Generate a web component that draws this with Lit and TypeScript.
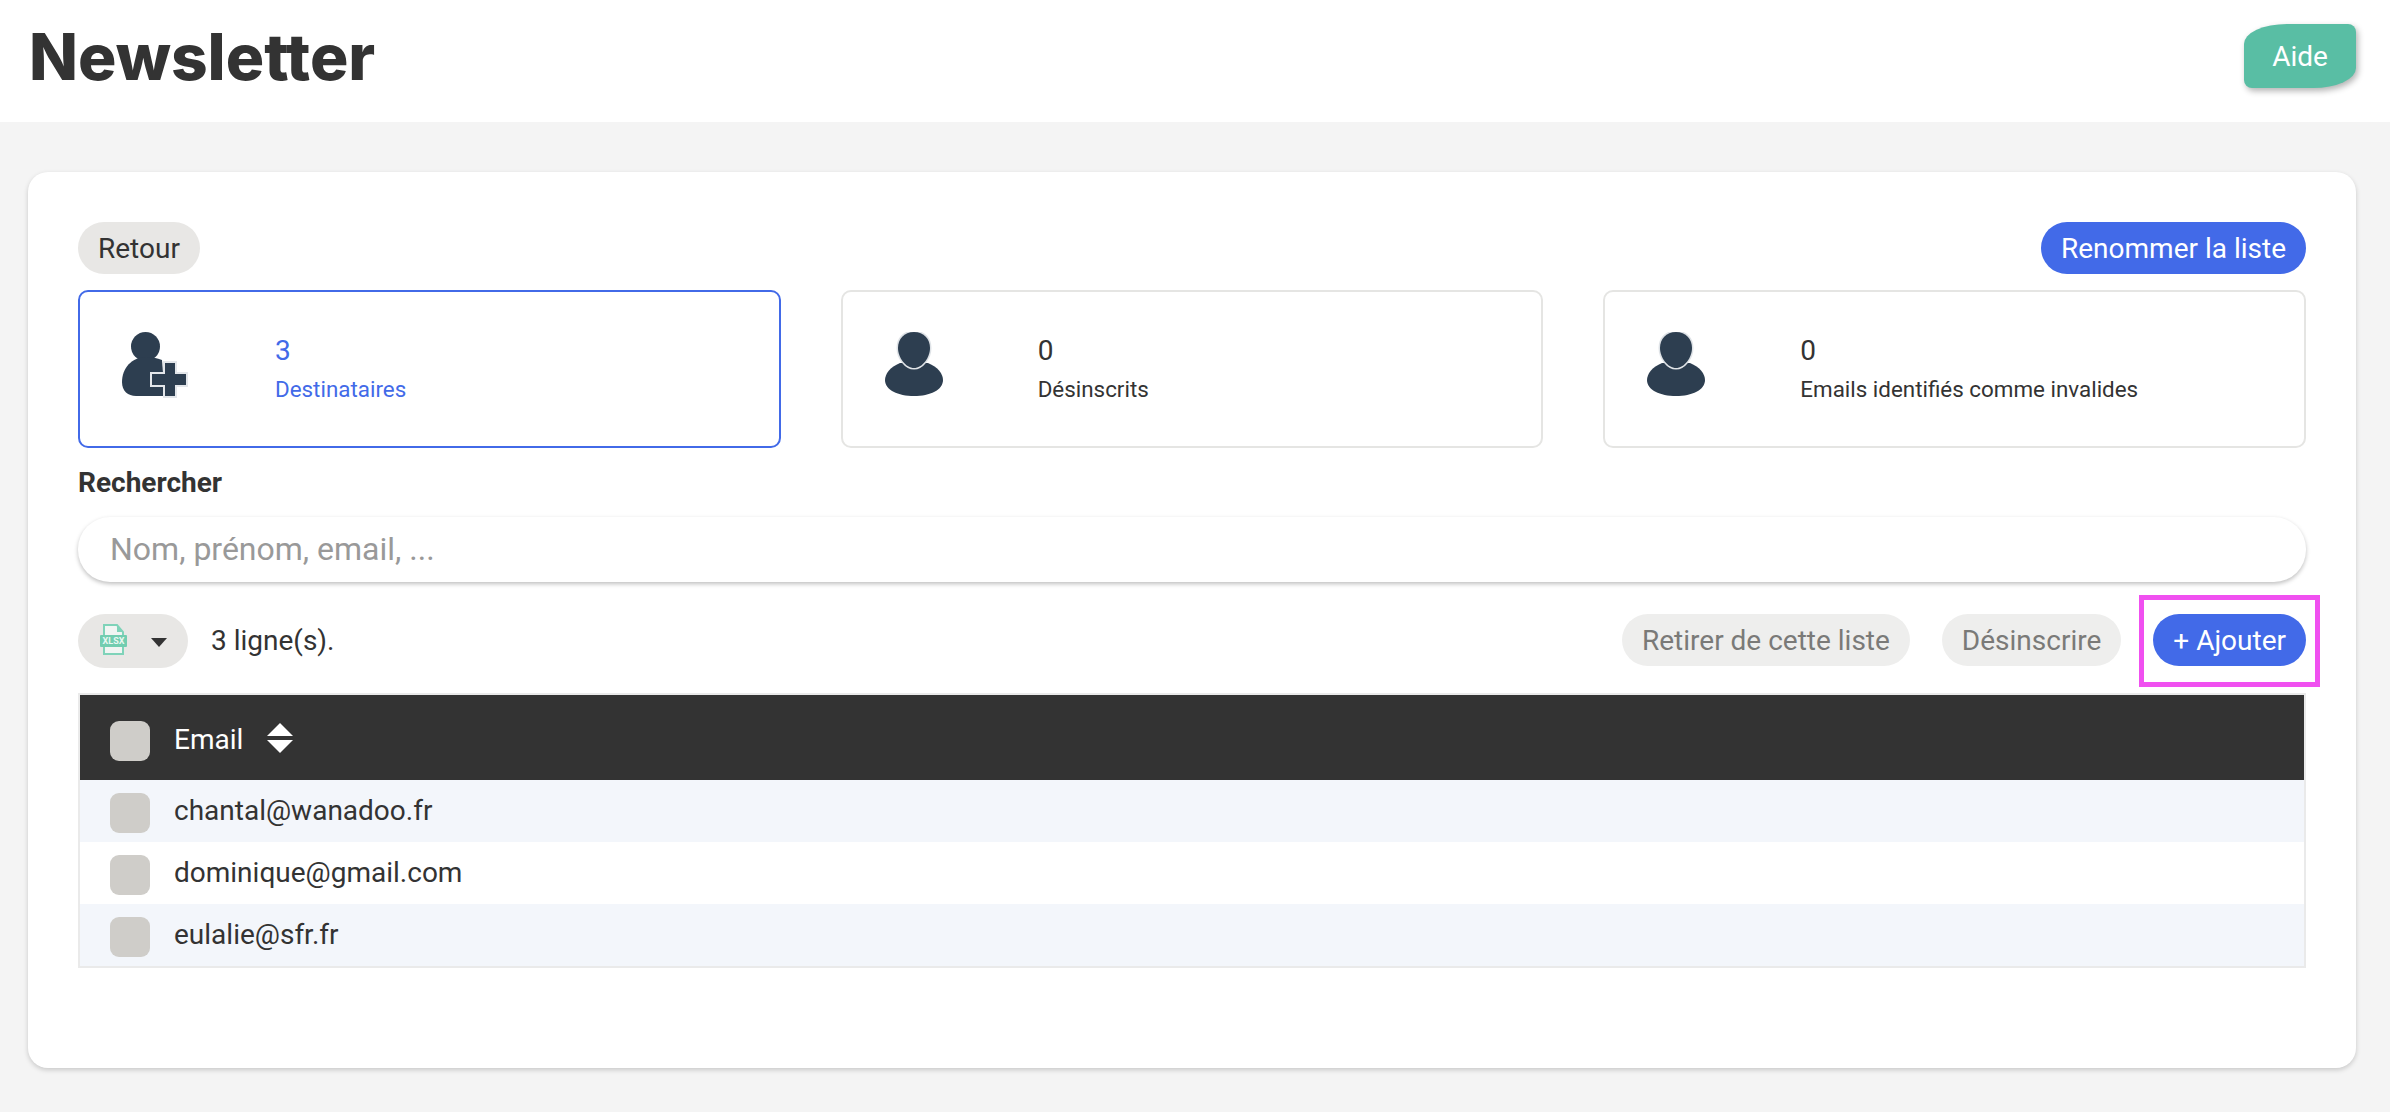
import { LitElement, html, css, svg } from "lit";
import { customElement } from "lit/decorators.js";

const personPlus = html`<svg width="66" height="66" viewBox="0 0 66 66">
  <circle cx="23.5" cy="14.5" r="14.5" fill="#2d3e50"/>
  <path d="M24 25C10 25 0 36 0 50c0 9 6 14 14 14h27V41l-1-13c-5-2-10-3-16-3z" fill="#2d3e50"/>
  <path d="M43 31h10v11h11v11H53v11H43V53H30V42h13z" fill="#2d3e50" stroke="#e3e6ea" stroke-width="4" paint-order="stroke"/>
</svg>`;

const person = html`<svg width="58" height="64" viewBox="0 0 58 64">
  <path d="M15 31C5 35 0 42 0 48c0 10 13 16 29 16s29-6 29-16c0-6-5-13-15-17z" fill="#2d3e50"/>
  <path d="M29 0c10 0 16 7 16 16 0 10-8 20-16 20S13 26 13 16C13 7 19 0 29 0z" fill="#2d3e50" stroke="#dfe3e7" stroke-width="3" paint-order="stroke"/>
</svg>`;

const xlsx = svg`<svg width="27" height="31" viewBox="0 0 27 31">
  <path d="M4 1h13l6 7v22H4z" fill="#f1f5f3" stroke="#7fd3b9" stroke-width="2"/>
  <path d="M17 1v7h6z" fill="#7fd3b9"/>
  <rect x="0" y="11" width="27" height="12" rx="1" fill="#72cdb0"/>
  <text x="13.5" y="20.3" text-anchor="middle" font-family="Roboto, sans-serif" font-size="9" font-weight="700" fill="#e9f8f2">XLSX</text>
</svg>`;

@customElement("app-root")
export class AppRoot extends LitElement {
  static styles = css`
    :host { display: block; min-height: 1112px; background: #f4f4f4; font-family: Roboto, "Noto Sans", sans-serif; color: #333; }
    * { box-sizing: border-box; }
    .top { height: 122px; background: #fff; display: flex; align-items: center; justify-content: space-between; padding: 0 34px 10px 29px; }
    h1 { margin: 2px 0 0; font: 800 64px/1 Inter, sans-serif; color: #333; letter-spacing: 0; }
    .aide { width: 112px; height: 64px; border-radius: 43px 8px 43px 8px / 20px 8px 20px 8px; background: #59bea4; color: #fff; font-size: 28px; display: flex; align-items: center; justify-content: center; box-shadow: 2px 3px 6px rgba(0,0,0,.3); }
    .card { margin: 50px 34px 0 28px; height: 896px; background: #fff; border-radius: 20px; box-shadow: 0 2px 5px rgba(0,0,0,.18); padding: 50px 50px 0; }
    .row { display: flex; align-items: center; justify-content: space-between; }
    .pill { height: 52px; border-radius: 26px; padding: 0 20px; font-size: 28px; display: inline-flex; align-items: center; white-space: nowrap; }
    .back { background: #e8e7e5; color: #333; }
    .blue { background: #426ae8; color: #fff; }
    .muted { background: #eeeeed; color: #7a7a78; }
    .stats { display: grid; grid-template-columns: repeat(3, 1fr); gap: 60px; margin-top: 16px; }
    .stat { height: 158px; border: 2px solid #e5e5e3; border-radius: 10px; display: flex; align-items: center; padding: 0 0 0 42px; color: #333; }
    .stat.on { border-color: #426ae8; color: #426ae8; }
    .ico-box { width: 153px; height: 64px; flex: none; display: flex; margin-bottom: 10px; }
    .stat-text { padding-top: 1px; }
    .num { font-size: 28px; line-height: 36px; margin-bottom: 2px; }
    .lab { font-size: 22.4px; line-height: 36px; }
    .search-label { font-size: 28px; font-weight: 700; margin-top: 20px; line-height: 30px; }
    .search { margin-top: 19px; height: 65px; border-radius: 32px; box-shadow: 0 2px 4px rgba(0,0,0,.25); display: flex; align-items: center; padding: 0 32px 2px; font-size: 32px; color: #999; }
    .tools { margin-top: 32px; height: 54px; }
    .left, .right { display: flex; align-items: center; }
    .right { gap: 32px; margin-bottom: 2px; }
    .xls { width: 110px; height: 54px; border-radius: 27px; background: #e8e7e5; display: flex; align-items: center; padding-left: 22px; gap: 24px; }
    .xls svg { margin-bottom: 3px; }
    .caret { width: 0; height: 0; border-left: 8.5px solid transparent; border-right: 8.5px solid transparent; border-top: 9px solid #333; margin-top: 3px; }
    .count { margin: 0 0 2px 23px; font-size: 28px; }
    .mark { position: relative; display: flex; }
    .mark::after { content: ""; position: absolute; left: -14px; right: -14px; top: -19px; bottom: -21px; border: 5px solid #f050f0; }
    .table { margin-top: 25px; border: 2px solid #eaeaea; }
    .tr { display: flex; align-items: center; height: 62px; padding-left: 30px; gap: 24px; font-size: 28px; color: #333; background: #fff; }
    .tr.odd { background: #f3f6fb; }
    .cb { width: 40px; height: 40px; border-radius: 9px; background: #cfcdc9; flex: none; margin-top: 4px; }
    .t { margin-bottom: 2px; }
    .tr.head { height: 85px; background: #333; color: #fff; }
    .tr.head .cb { margin-top: 6px; }
    .tr.head .t { margin: 3px 0 0; }
    .sort { display: block; }
  `;

  render() {
    const rows = ["chantal@wanadoo.fr", "dominique@gmail.com", "eulalie@sfr.fr"];
    return html`
      <header class="top"><h1>Newsletter</h1><div class="aide">Aide</div></header>
      <main class="card">
        <div class="row">
          <div class="pill back">Retour</div>
          <div class="pill blue">Renommer la liste</div>
        </div>
        <div class="stats">
          <div class="stat on"><div class="ico-box">${personPlus}</div><div class="stat-text"><div class="num">3</div><div class="lab">Destinataires</div></div></div>
          <div class="stat"><div class="ico-box">${person}</div><div class="stat-text"><div class="num">0</div><div class="lab">Désinscrits</div></div></div>
          <div class="stat"><div class="ico-box">${person}</div><div class="stat-text"><div class="num">0</div><div class="lab">Emails identifiés comme invalides</div></div></div>
        </div>
        <div class="search-label">Rechercher</div>
        <div class="search">Nom, prénom, email, ...</div>
        <div class="row tools">
          <div class="left">
            <div class="xls">${xlsx}<span class="caret"></span></div>
            <span class="count">3 ligne(s).</span>
          </div>
          <div class="right">
            <div class="pill muted">Retirer de cette liste</div>
            <div class="pill muted">Désinscrire</div>
            <div class="mark"><div class="pill blue">+ Ajouter</div></div>
          </div>
        </div>
        <div class="table">
          <div class="tr head"><span class="cb"></span><span class="t">Email</span>
            <svg class="sort" width="26" height="30" viewBox="0 0 26 30"><path d="M13 0l13 13H0z" fill="#fff"/><path d="M0 17h26L13 30z" fill="#fff"/></svg>
          </div>
          ${rows.map((r, i) => html`<div class="tr ${i % 2 === 0 ? "odd" : ""}"><span class="cb"></span><span class="t">${r}</span></div>`)}
        </div>
      </main>
    `;
  }
}
